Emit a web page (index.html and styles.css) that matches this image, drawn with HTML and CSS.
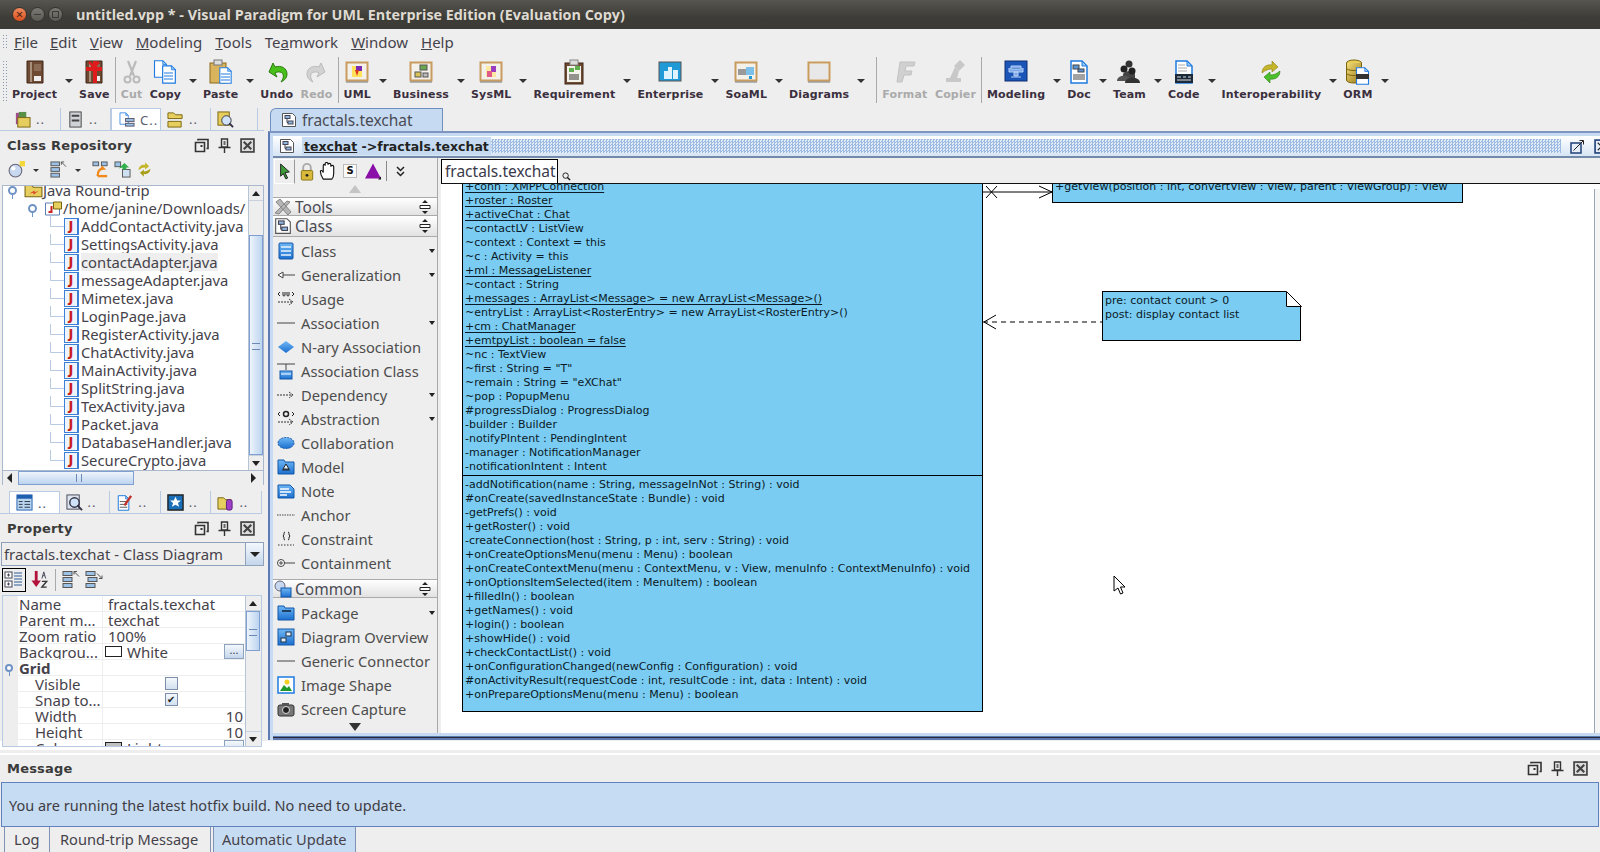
FILE: index.html
```html
<!DOCTYPE html>
<html lang="en">
<head>
<meta charset="utf-8">
<title>untitled.vpp * - Visual Paradigm for UML Enterprise Edition (Evaluation Copy)</title>
<link rel="stylesheet" href="styles.css">
</head>
<body>
<svg class="defs" width="0" height="0" aria-hidden="true">
  <defs>
    <linearGradient id="gb" x1="0" y1="0" x2="0" y2="1"><stop offset="0" stop-color="#6fb8f5"/><stop offset="1" stop-color="#1c6fd0"/></linearGradient>
    <linearGradient id="gold" x1="0" y1="0" x2="1" y2="1"><stop offset="0" stop-color="#f3dc7a"/><stop offset="1" stop-color="#9a7a17"/></linearGradient>
    <symbol id="restore" viewBox="0 0 15 15"><path d="M1.5 4.5h9v9h-9z M4 2.5V1.500h10v9h-1.500" fill="none" stroke="#333" stroke-width="1.600"/><rect x="6.500" y="7" width="2" height="2" fill="#333"/></symbol>
    <symbol id="pin" viewBox="0 0 13 15"><path d="M3.500 1h6v8h-6z M0.500 9.500h12 M6.500 10v5" fill="none" stroke="#333" stroke-width="1.400"/><rect x="5.500" y="3" width="2" height="4" fill="#666"/></symbol>
    <symbol id="close" viewBox="0 0 14 14"><rect x="1" y="1" width="12" height="12" fill="#ddd" stroke="#444" stroke-width="1.600"/><path d="M3.500 3.500l7 7M10.500 3.500l-7 7" stroke="#444" stroke-width="2"/></symbol>
    <symbol id="book" viewBox="0 0 26 26"><path d="M5 2h16v22H5z" fill="#6f4a32" stroke="#3e2616"/><path d="M9 3v20" stroke="#a8907c" stroke-width="2"/><rect x="12" y="17" width="7" height="5" fill="#eee"/><rect x="12" y="5" width="7" height="7" fill="#8a6c56"/></symbol>
    <symbol id="framed" viewBox="0 0 26 26"><rect x="2.500" y="3.500" width="21" height="18" fill="#f4f1ea" stroke="#c89b5e" stroke-width="2"/><path d="M2 23h22" stroke="#777"/></symbol>
    <symbol id="doc" viewBox="0 0 20 24"><path d="M2 1h11l5 5v17H2z" fill="#fff" stroke="#1f7be0" stroke-width="1.500"/><path d="M13 1v5h5z" fill="#9ac8f5" stroke="#1f7be0"/></symbol>
    <symbol id="diagramdoc" viewBox="0 0 16 16"><path d="M1.500 1.500h10l3 3v10h-13z" fill="#fff" stroke="#555"/><rect x="4" y="3.500" width="5" height="3" fill="#8fb6de" stroke="#445"/><rect x="7" y="9" width="5" height="3" fill="#8fb6de" stroke="#445"/><path d="M6 6.500v4h1" fill="none" stroke="#445"/></symbol>
    <symbol id="updown" viewBox="0 0 12 14"><path d="M6 0l3 3H3zM6 14l-3-3h6z" fill="#222"/><path d="M1 5.500h10v3H1z" fill="#fff" stroke="#222"/></symbol>
  </defs>
</svg>

<div class="app">
  <header class="titlebar">
    <span class="wbtn wclose">×</span>
    <span class="wbtn wmin"></span>
    <span class="wbtn wmax"></span>
    <span class="wtitle">untitled.vpp * - Visual Paradigm for UML Enterprise Edition (Evaluation Copy)</span>
  </header>

  <nav class="menubar">
    <i class="grip"></i>
    <span class="mi"><u>F</u>ile</span><span class="mi"><u>E</u>dit</span><span class="mi"><u>V</u>iew</span><span class="mi"><u>M</u>odeling</span><span class="mi"><u>T</u>ools</span><span class="mi">Te<u>a</u>mwork</span><span class="mi"><u>W</u>indow</span><span class="mi"><u>H</u>elp</span>
  </nav>

  <div class="toolbar">
    <i class="grip tall"></i>
    <div class="tool"><svg class="ti"><use href="#book"/></svg><span>Project</span></div><b class="arr"></b>
    <div class="tool"><svg class="ti" viewBox="0 0 26 26"><use href="#book" width="26" height="26"/><path d="M12 2h4v22h-4z" fill="#e01b1b"/><path d="M5 8h16v4H5z" fill="#e01b1b"/><path d="M8 3l5 5 5-5" fill="none" stroke="#e01b1b" stroke-width="2.500"/></svg><span>Save</span></div>
    <i class="sep"></i>
    <div class="tool off"><svg class="ti" viewBox="0 0 26 26"><path d="M9 2l6 15M17 2l-6 15" stroke="#bbb" stroke-width="2.200" fill="none"/><circle cx="8.500" cy="20.500" r="3" fill="none" stroke="#bbb" stroke-width="2"/><circle cx="17.500" cy="20.500" r="3" fill="none" stroke="#bbb" stroke-width="2"/></svg><span>Cut</span></div>
    <div class="tool gapl"><svg class="ti" viewBox="0 0 26 26"><use href="#doc" x="1" y="1" width="15" height="18"/><use href="#doc" x="9" y="6" width="16" height="19"/><path d="M12 14h9M12 17h9M12 20h9" stroke="#1f7be0"/></svg><span>Copy</span></div><b class="arr"></b>
    <div class="tool"><svg class="ti" viewBox="0 0 26 26"><rect x="2" y="4" width="16" height="20" fill="#d9b45c" stroke="#8a6a1c"/><rect x="6" y="1" width="8" height="5" fill="#ddd" stroke="#777"/><use href="#doc" x="10" y="8" width="15" height="17"/><path d="M13 15h9M13 18h9M13 21h9" stroke="#1f7be0"/></svg><span>Paste</span></div><b class="arr"></b>
    <div class="tool"><svg class="ti" viewBox="0 0 26 26"><path d="M5 13l4-9 2 4c6-2 12 1 12 7 0 5-4 7-6 8 2-3 3-5 2-8-1-2-5-3-8-1l2 4z" fill="#48c01a" stroke="#2c7a10"/></svg><span>Undo</span></div>
    <div class="tool off gapl"><svg class="ti" viewBox="0 0 26 26"><path d="M21 13l-4-9-2 4C9 6 3 9 3 15c0 5 4 7 6 8-2-3-3-5-2-8 1-2 5-3 8-1l-2 4z" fill="#d2d2d2" stroke="#bbb"/></svg><span>Redo</span></div>
    <i class="sep"></i>
    <div class="tool"><svg class="ti" viewBox="0 0 26 26"><use href="#framed" width="26" height="26"/><path d="M8 7h10v11H8z" fill="#ffe25a"/><path d="M12 7h6v5h-6z" fill="#7a2bb0"/><path d="M11 11h4l-2 6z" fill="#d32"/></svg><span>UML</span></div><b class="arr"></b>
    <div class="tool"><svg class="ti" viewBox="0 0 26 26"><use href="#framed" width="26" height="26"/><rect x="12" y="6" width="7" height="5" fill="#6aa84f" stroke="#555"/><rect x="7" y="13" width="6" height="5" fill="#d8c25a" stroke="#555"/><rect x="15" y="14" width="5" height="4" fill="#bbb" stroke="#555"/></svg><span>Business</span></div><b class="arr"></b>
    <div class="tool"><svg class="ti" viewBox="0 0 26 26"><use href="#framed" width="26" height="26"/><path d="M8 7h10v11H8z" fill="#ffe9a0"/><path d="M13 7h5v6h-5z" fill="#9a3bc0"/><path d="M9 12h5v6H9z" fill="#e05a8a"/></svg><span>SysML</span></div><b class="arr"></b>
    <div class="tool"><svg class="ti" viewBox="0 0 26 26"><rect x="4" y="4" width="18" height="21" fill="#6f4a32" stroke="#3e2616"/><rect x="6" y="7" width="14" height="16" fill="#f2f2ea"/><rect x="9" y="1" width="8" height="5" fill="#ddd" stroke="#888"/><rect x="8" y="9" width="5" height="4" fill="#5fae4f"/><rect x="14" y="7" width="5" height="4" fill="#5fae4f"/><path d="M8 16h10M8 18h10M8 20h10" stroke="#333"/></svg><span>Requirement</span></div><b class="arr"></b>
    <div class="tool"><svg class="ti" viewBox="0 0 26 26"><rect x="2" y="3" width="22" height="19" fill="#1f9ad6" stroke="#555"/><path d="M7 20v-8h4v-4h4v12zM16 20v-9h5v9z" fill="#dff3ff"/></svg><span>Enterprise</span></div><b class="arr"></b>
    <div class="tool"><svg class="ti" viewBox="0 0 26 26"><use href="#framed" width="26" height="26"/><rect x="5" y="10" width="8" height="6" fill="#999"/><rect x="13" y="8" width="8" height="8" fill="#7cc0ea"/><rect x="16" y="17" width="3" height="3" fill="#1f9ad6"/></svg><span>SoaML</span></div><b class="arr"></b>
    <div class="tool"><svg class="ti" viewBox="0 0 26 26"><use href="#framed" width="26" height="26"/><rect x="4" y="5" width="18" height="15" fill="#e8e8e8"/></svg><span>Diagrams</span></div><b class="arr"></b>
    <i class="sep"></i>
    <div class="tool off"><svg class="ti" viewBox="0 0 26 26"><path d="M8 3h15l-1 4H14l-1 5h7l-1 4h-7l-2 7H5z" fill="#d0d0d0" stroke="#c2c2c2"/></svg><span>Format</span></div>
    <div class="tool off gapl"><svg class="ti" viewBox="0 0 26 26"><path d="M18 1l5 5-6 6-5-5z" fill="#c8c8c8"/><path d="M13 8l4 4-2 7H8z" fill="#c8c8c8"/><rect x="4" y="19" width="15" height="4" fill="#c8c8c8"/></svg><span>Copier</span></div>
    <i class="sep"></i>
    <div class="tool"><svg class="ti" viewBox="0 0 26 26"><rect x="2" y="2" width="22" height="20" fill="#1c55b8" stroke="#0d2f6e"/><path d="M8 7h10v3H8zM11 13h4v4h-4zM6 9v4h14V9M8 18h10" fill="#7da8e8" stroke="#b7d0f5"/></svg><span>Modeling</span></div><b class="arr"></b>
    <div class="tool"><svg class="ti" viewBox="0 0 26 26"><use href="#doc" x="3" y="1" width="20" height="24"/><rect x="7" y="6" width="6" height="4" fill="#5c95d6" stroke="#444"/><rect x="12" y="10" width="6" height="3" fill="#5c95d6" stroke="#444"/><path d="M7 16h12M7 18h12M7 20h12" stroke="#444"/></svg><span>Doc</span></div><b class="arr"></b>
    <div class="tool"><svg class="ti" viewBox="0 0 26 26"><circle cx="13" cy="5" r="3.500" fill="#333"/><path d="M7 16c0-5 12-5 12 0v4H7z" fill="#444"/><circle cx="8" cy="10" r="3.500" fill="#222"/><path d="M1 22c0-7 14-7 14 0z" fill="#555"/><circle cx="16" cy="12" r="3.500" fill="#222"/><path d="M9 24c0-7 15-7 15 0z" fill="#333"/></svg><span>Team</span></div><b class="arr"></b>
    <div class="tool"><svg class="ti" viewBox="0 0 26 26"><use href="#doc" x="3" y="1" width="20" height="24"/><path d="M7 6h7M7 9h9M7 12h9" stroke="#aaa"/><rect x="4" y="15" width="18" height="9" fill="#1b2a3a"/><path d="M6 18h4M12 18h3M17 18h3M6 21h14" stroke="#ddd"/></svg><span>Code</span></div><b class="arr"></b>
    <div class="tool"><svg class="ti" viewBox="0 0 26 26"><path d="M4 14c0-6 5-9 10-8V2l6 6-6 5v-3c-4 0-6 1-10 4z" fill="#c5b52a" stroke="#8a7d12" stroke-width=".6"/><path d="M22 12c0 6-5 9-10 8v4l-6-6 6-5v3c4 0 6-1 10-4z" fill="#4cc02a" stroke="#2c7a10" stroke-width=".6"/></svg><span>Interoperability</span></div><b class="arr"></b>
    <div class="tool"><svg class="ti" viewBox="0 0 26 26"><ellipse cx="9" cy="4" rx="7.500" ry="3" fill="#e7cf58" stroke="#7a6410"/><path d="M1.500 4v17c0 4 15 4 15 0V4" fill="url(#gold)" stroke="#7a6410"/><path d="M2 10c3 2 11 2 14 0M2 15c3 2 11 2 14 0" stroke="#7a6410" fill="none"/><use href="#doc" x="10" y="8" width="15" height="18"/><rect x="11" y="15" width="13" height="5" fill="#333"/></svg><span>ORM</span></div><b class="arr"></b>
  </div>

  <div class="workspace">
    <aside class="left">
      <div class="docktabs one">
        <span class="dtab"><svg class="dti" viewBox="0 0 18 18"><rect x="2" y="2" width="8" height="12" fill="#a04b8a"/><rect x="5" y="1" width="8" height="12" fill="#5a8f4a"/><rect x="4" y="7" width="13" height="10" fill="#e5cd5e" stroke="#7a6410"/></svg><em>..</em></span>
        <span class="dtab"><svg class="dti" viewBox="0 0 18 18"><rect x="3" y="1" width="12" height="16" fill="#cfd2d6" stroke="#444"/><path d="M5 5h8M5 10h8" stroke="#444" stroke-width="2"/></svg><em>..</em></span>
        <span class="dtab"><svg class="dti" viewBox="0 0 18 18"><use href="#doc" x="1" y="1" width="11" height="14"/><rect x="8" y="8" width="9" height="3" fill="#9cc1e6" stroke="#556"/><rect x="8" y="13" width="9" height="3" fill="#9cc1e6" stroke="#556"/></svg><em>C..</em></span>
        <span class="dtab"><svg class="dti" viewBox="0 0 18 18"><path d="M1 2h6l2 2h7v4H1z" fill="#e6cf5e" stroke="#7a6410"/><path d="M1 11h14v6H1z" fill="#e6cf5e" stroke="#7a6410"/></svg><em>..</em></span>
        <span class="dtab"><svg class="dti" viewBox="0 0 18 18"><rect x="1" y="1" width="12" height="14" fill="#e5cd5e" stroke="#7a6410"/><circle cx="10" cy="10" r="5" fill="#cfe2f7" stroke="#334"/><path d="M13 13l4 4" stroke="#334" stroke-width="2"/></svg></span>
      </div>

      <div class="phead rep"><span>Class Repository</span><div class="pbtns"><svg><use href="#restore"/></svg><svg><use href="#pin"/></svg><svg><use href="#close"/></svg></div></div>

      <div class="reptools">
        <svg class="rt" viewBox="0 0 16 16"><circle cx="7" cy="9" r="6" fill="#c7d8f0" stroke="#667"/><circle cx="5" cy="7" r="2" fill="#fff"/><rect x="11" y="0" width="5" height="5" fill="#f4d83a"/></svg><b class="arr small"></b>
        <svg class="rt" viewBox="0 0 18 18"><rect x="1" y="1" width="9" height="4" fill="#9cc1e6" stroke="#555"/><rect x="1" y="7" width="9" height="4" fill="#9cc1e6" stroke="#555"/><rect x="1" y="13" width="9" height="4" fill="#9cc1e6" stroke="#555"/><path d="M12 1l5 5M12 1h3M12 1v3" stroke="#555" fill="none"/></svg><b class="arr small"></b>
        <svg class="rt" viewBox="0 0 18 18"><rect x="1" y="1" width="6" height="4" fill="#9cc1e6" stroke="#555"/><rect x="10" y="1" width="6" height="4" fill="#9cc1e6" stroke="#555"/><path d="M6 16c0-6 2-8 6-8l-2-2" stroke="#f08a1c" stroke-width="2.500" fill="none"/><path d="M6 16h10" stroke="#f08a1c" stroke-width="2.500"/></svg>
        <svg class="rt" viewBox="0 0 18 18"><rect x="1" y="1" width="6" height="5" fill="#9cc1e6" stroke="#555"/><rect x="9" y="9" width="8" height="8" fill="#cfe0f2" stroke="#555"/><path d="M5 8l6-6 5 5-3 0 0 2h-4l0-2z" fill="#2fb04a"/></svg>
        <svg class="rt" viewBox="0 0 26 26"><path d="M4 14c0-6 5-9 10-8V2l6 6-6 5v-3c-4 0-6 1-10 4z" fill="#c5b52a"/><path d="M22 12c0 6-5 9-10 8v4l-6-6 6-5v3c4 0 6-1 10-4z" fill="#a8a018"/></svg>
      </div>

      <div class="treebox">
        <div class="treeinner">
          <div class="tree">
            <div class="row r0"><i class="knob"></i><svg class="folder" viewBox="0 0 18 14"><path d="M1 2h6l2 2h8v9H1z" fill="#e6cf5e" stroke="#7a6410"/><path d="M5 10l5-3v2l4-2-5 4v-2z" fill="#d32"/></svg><span>Java Round-trip</span></div>
            <div class="row r1"><i class="knob"></i><svg class="folder" viewBox="0 0 18 16"><path d="M1 3h14v12H1z" fill="#fff" stroke="#5c7fb5"/><path d="M9 2h8v7H9z" fill="#e6cf5e" stroke="#7a6410"/><path d="M7 6v6H4" stroke="#c22" stroke-width="2" fill="none"/></svg><span>/home/janine/Downloads/</span></div>
            <div class="row r2"><i class="j">J</i><span>AddContactActivity.java</span></div>
            <div class="row r2"><i class="j">J</i><span>SettingsActivity.java</span></div>
            <div class="row r2"><i class="j">J</i><span class="hl">contactAdapter.java</span></div>
            <div class="row r2"><i class="j">J</i><span>messageAdapter.java</span></div>
            <div class="row r2"><i class="j">J</i><span>Mimetex.java</span></div>
            <div class="row r2"><i class="j">J</i><span>LoginPage.java</span></div>
            <div class="row r2"><i class="j">J</i><span>RegisterActivity.java</span></div>
            <div class="row r2"><i class="j">J</i><span>ChatActivity.java</span></div>
            <div class="row r2"><i class="j">J</i><span>MainActivity.java</span></div>
            <div class="row r2"><i class="j">J</i><span>SplitString.java</span></div>
            <div class="row r2"><i class="j">J</i><span>TexActivity.java</span></div>
            <div class="row r2"><i class="j">J</i><span>Packet.java</span></div>
            <div class="row r2"><i class="j">J</i><span>DatabaseHandler.java</span></div>
            <div class="row r2"><i class="j">J</i><span>SecureCrypto.java</span></div>
          </div>
          <div class="vbar tall"><b class="vbtn up"></b><i class="vthumb treethumb"></i><b class="vbtn down"></b></div>
        </div>
        <div class="hbar"><b class="hbtn lf"></b><i class="hthumb"></i><i class="hfill"></i><b class="hbtn rt2"></b></div>
      </div>

      <div class="docktabs two">
        <span class="dtab on"><svg class="dti" viewBox="0 0 18 18"><rect x="1" y="1" width="16" height="16" fill="#bcd6f0" stroke="#1f5fb0"/><rect x="1" y="1" width="16" height="4" fill="#1f5fb0"/><path d="M3 8h4M9 8h6M3 11h4M9 11h6M3 14h4M9 14h6" stroke="#234"/></svg><em>..</em></span>
        <span class="dtab"><svg class="dti" viewBox="0 0 18 18"><rect x="1" y="1" width="13" height="15" fill="#dde6f0" stroke="#445"/><circle cx="9" cy="9" r="5" fill="#cfe2f7" stroke="#334" stroke-width="1.500"/><path d="M12 12l5 5" stroke="#334" stroke-width="2"/></svg><em>..</em></span>
        <span class="dtab"><svg class="dti" viewBox="0 0 18 18"><use href="#doc" x="1" y="1" width="14" height="17"/><path d="M4 8h8M4 11h8M4 14h8" stroke="#555"/><path d="M9 12l7-10" stroke="#c2302a" stroke-width="2.500"/></svg><em>..</em></span>
        <span class="dtab"><svg class="dti" viewBox="0 0 18 18"><rect x="1" y="1" width="16" height="16" fill="#1b6fb8" stroke="#222" stroke-width="1.500"/><path d="M9 3l1.800 4h4l-3.200 2.600 1.200 4L9 11.400 5.200 13.600l1.200-4L3.200 7h4z" fill="#fff"/></svg><em>..</em></span>
        <span class="dtab"><svg class="dti" viewBox="0 0 18 18"><path d="M1 4h6l2 2h6v10H1z" fill="#e6cf5e" stroke="#7a6410"/><rect x="10" y="6" width="6" height="11" rx="2" fill="#a040c8" stroke="#5a1c80"/></svg><em>..</em></span>
      </div>

      <div class="phead prop"><span>Property</span><div class="pbtns"><svg><use href="#restore"/></svg><svg><use href="#pin"/></svg><svg><use href="#close"/></svg></div></div>

      <div class="combo"><span>fractals.texchat - Class Diagram</span><b class="cbtn"></b></div>

      <div class="ptools">
        <span class="ptsel"><svg viewBox="0 0 20 20"><rect x="1" y="2" width="7" height="6" fill="#fff" stroke="#445"/><rect x="1" y="11" width="7" height="6" fill="#fff" stroke="#445"/><path d="M10 3h8M10 6h8M10 9h8M10 12h8M10 15h8" stroke="#6d8db5" stroke-width="1.500"/><path d="M3 5h3M4.500 3.500v3M3 14h3M4.500 12.500v3" stroke="#445"/></svg></span>
        <svg class="pt" viewBox="0 0 18 20"><path d="M5 1v12" stroke="#b3123c" stroke-width="3"/><path d="M0 11h10l-5 7z" fill="#b3123c"/><path d="M11 9l2-7 2 7M12 6h2" stroke="#445" fill="none"/><path d="M11 12h5l-5 6h5" stroke="#333" fill="none" stroke-width="1.500"/></svg>
        <i class="ptsep"></i>
        <svg class="pt" viewBox="0 0 18 18"><rect x="1" y="1" width="9" height="4" fill="#9cc1e6" stroke="#555"/><rect x="1" y="7" width="9" height="4" fill="#9cc1e6" stroke="#555"/><rect x="1" y="13" width="9" height="4" fill="#9cc1e6" stroke="#555"/><path d="M12 1l5 5M12 1h3M12 1v3" stroke="#555" fill="none"/></svg>
        <svg class="pt" viewBox="0 0 18 18"><rect x="1" y="1" width="9" height="4" fill="#9cc1e6" stroke="#555"/><rect x="3" y="7" width="9" height="4" fill="#9cc1e6" stroke="#555"/><rect x="1" y="13" width="9" height="4" fill="#9cc1e6" stroke="#555"/><path d="M12 3l5 5M17 8h-3M17 8V5" stroke="#555" fill="none"/></svg>
      </div>

      <div class="ptable">
        <div class="pgrid">
          <div class="pr"><span class="pn">Name</span><span class="pv">fractals.texchat</span></div>
          <div class="pr"><span class="pn">Parent m...</span><span class="pv">texchat</span></div>
          <div class="pr"><span class="pn">Zoom ratio</span><span class="pv">100%</span></div>
          <div class="pr"><span class="pn">Backgrou...</span><span class="pv"><i class="swatch"></i>White<b class="more">...</b></span></div>
          <div class="pr"><span class="pn grid"><i class="knob small"></i>Grid</span><span class="pv"></span></div>
          <div class="pr"><span class="pn ind">Visible</span><span class="pv ctr"><i class="chk"></i></span></div>
          <div class="pr"><span class="pn ind">Snap to...</span><span class="pv ctr"><i class="chk">✔</i></span></div>
          <div class="pr"><span class="pn ind">Width</span><span class="pv num">10</span></div>
          <div class="pr"><span class="pn ind">Height</span><span class="pv num">10</span></div>
          <div class="pr"><span class="pn ind">Color</span><span class="pv"><i class="swatch gray"></i>Light gray<b class="more">...</b></span></div>
        </div>
        <div class="vbar"><b class="vbtn up"></b><i class="vthumb propthumb"></i><b class="vbtn down"></b></div>
      </div>
    </aside>

    <main class="editor">
      <div class="edtabs">
        <span class="edtab"><svg><use href="#diagramdoc"/></svg>fractals.texchat</span>
      </div>
      <div class="frame">
        <div class="ftitle">
          <svg class="fdoc"><use href="#diagramdoc"/></svg>
          <span class="fname"><u>texchat</u> -&gt;fractals.texchat</span>
          <i class="dots"></i>
          <svg class="fbtn" viewBox="0 0 15 15"><rect x="1" y="4" width="10" height="10" fill="#e6eef8" stroke="#2c4a80" stroke-width="1.600"/><path d="M3.500 11.500L13 2M9.500 1.500h4v4" fill="none" stroke="#222"/></svg>
          <svg class="fbtn cut" viewBox="0 0 14 14"><rect x="1" y="1" width="12" height="12" fill="#e6eef8" stroke="#2c4a80" stroke-width="1.600"/><path d="M3.500 3.500l7 7M10.500 3.500l-7 7" stroke="#222"/></svg>
        </div>
        <div class="fview">
          <section class="palette">
            <div class="paltools">
              <span class="palsel"><svg viewBox="0 0 16 20"><path d="M3 2l10 9-5 1 3 6-2 1-3-6-3 3z" fill="#3f9a3a" stroke="#111"/></svg></span>
              <svg class="pal18 lock" viewBox="0 0 18 20"><path d="M5 9V6a4 4 0 018 0v3" fill="none" stroke="#aaa" stroke-width="2"/><rect x="3" y="9" width="12" height="10" rx="1" fill="#d8b93c" stroke="#8a7316"/><circle cx="9" cy="14" r="1.500" fill="#222"/></svg>
              <svg class="pal18" viewBox="0 0 18 20"><path d="M4 18c-2-3-3-6-3-8s2-1 3 1V4c0-2 2-2 2 0V2c0-2 3-2 3 0v1c0-2 3-2 3 0v2c0-2 3-2 3 0v7c0 3-1 5-2 6z" fill="#fff" stroke="#111" stroke-width="1.200"/></svg>
              <span class="sbtn">S</span>
              <svg class="pal18 tri" viewBox="0 0 18 18"><path d="M9 1l8 15H1z" fill="#8a0fa8"/><path d="M14 17l3-3v3z" fill="#111"/></svg>
              <i class="palsep"></i>
              <svg class="chev" viewBox="0 0 9 11"><path d="M1 1l3.500 3.500L8 1M1 6l3.500 3.500L8 6" fill="none" stroke="#222" stroke-width="1.500"/></svg>
            </div>
            <div class="palup"></div>
            <div class="palhead tools"><svg viewBox="0 0 18 18" class="phi"><path d="M2 4l4-3 11 13-3 3zM1 15L13 3l3 1-11 12z" fill="#b5b5b5" stroke="#888"/></svg><span>Tools</span><svg class="ud"><use href="#updown"/></svg></div>
            <div class="palhead cls"><svg class="phi"><use href="#diagramdoc"/></svg><span>Class</span><svg class="ud"><use href="#updown"/></svg></div>
            <div class="palitems">
              <div class="pi more1"><svg viewBox="0 0 18 18"><rect x="2" y="1" width="14" height="16" rx="1" fill="url(#gb)" stroke="#1357a8"/><path d="M4 5h10M4 9h10M4 13h10" stroke="#e8f3ff" stroke-width="1.500"/></svg><span>Class</span></div>
              <div class="pi more1"><svg viewBox="0 0 18 18"><path d="M6 9h12" stroke="#444"/><path d="M1 9l5-3v6z" fill="#fff" stroke="#444"/></svg><span>Generalization</span></div>
              <div class="pi"><svg viewBox="0 0 18 18"><path d="M1 12h15M12 9l4 3-4 3" fill="none" stroke="#333" stroke-dasharray="2 1"/><path d="M6 2v3a1 1 0 002 0V2M10 2v3a1 1 0 002 0V2M3 2L1 4l2 2M15 2l2 2-2 2" fill="none" stroke="#222"/></svg><span>Usage</span></div>
              <div class="pi more1"><svg viewBox="0 0 18 18"><path d="M0 9h18" stroke="#444"/></svg><span>Association</span></div>
              <div class="pi"><svg viewBox="0 0 18 18"><path d="M9 3l8 6-8 6-8-6z" fill="url(#gb)"/></svg><span>N-ary Association</span></div>
              <div class="pi"><svg viewBox="0 0 18 18"><path d="M0 2h18M9 2v6" stroke="#444"/><rect x="3" y="9" width="12" height="8" fill="url(#gb)" stroke="#1357a8"/><path d="M4 12h10" stroke="#fff"/></svg><span>Association Class</span></div>
              <div class="pi more1"><svg viewBox="0 0 18 18"><path d="M0 9h16M12 6l4 3-4 3" fill="none" stroke="#333" stroke-dasharray="2 1"/></svg><span>Dependency</span></div>
              <div class="pi more1"><svg viewBox="0 0 18 18"><path d="M1 12h15M12 9l4 3-4 3" fill="none" stroke="#333" stroke-dasharray="2 1"/><path d="M3 2L1 4l2 2M15 2l2 2-2 2" fill="none" stroke="#222"/><circle cx="9" cy="4" r="2.500" fill="none" stroke="#222" stroke-width="1.500"/></svg><span>Abstraction</span></div>
              <div class="pi"><svg viewBox="0 0 18 18"><ellipse cx="9" cy="9" rx="8" ry="5.500" fill="url(#gb)" stroke="#1357a8" stroke-dasharray="2 1"/></svg><span>Collaboration</span></div>
              <div class="pi"><svg viewBox="0 0 18 18"><path d="M1 4V2h6l1 2h9v12H1z" fill="url(#gb)" stroke="#1357a8"/><path d="M9 6l3 5H6zM5 12h8" fill="#e8f3ff" stroke="#222"/></svg><span>Model</span></div>
              <div class="pi"><svg viewBox="0 0 18 18"><path d="M1 3h12l4 4v9H1z" fill="url(#gb)" stroke="#1357a8"/><path d="M3 7h9M3 10h11M3 13h7" stroke="#fff" stroke-width="1.300"/></svg><span>Note</span></div>
              <div class="pi"><svg viewBox="0 0 18 18"><path d="M0 9h18" stroke="#444" stroke-dasharray="1.500 1"/></svg><span>Anchor</span></div>
              <div class="pi"><svg viewBox="0 0 18 18"><path d="M1 15h16" stroke="#333" stroke-dasharray="1.500 1.500"/><path d="M8 2c-2 0 0 3-2 4 2 1 0 4 2 4M11 2c2 0 0 3 2 4-2 1 0 4-2 4" fill="none" stroke="#222"/></svg><span>Constraint</span></div>
              <div class="pi"><svg viewBox="0 0 18 18"><circle cx="4" cy="9" r="3.500" fill="#fff" stroke="#444"/><path d="M2 9h4M4 7v4M7 9h11" stroke="#444"/></svg><span>Containment</span></div>
            </div>
            <div class="palhead common"><svg viewBox="0 0 18 18" class="phi"><circle cx="6" cy="6" r="5" fill="#c7d8f0" stroke="#667"/><rect x="7" y="8" width="10" height="9" fill="url(#gb)" stroke="#1357a8"/></svg><span>Common</span><svg class="ud"><use href="#updown"/></svg></div>
            <div class="palitems low">
              <div class="pi more1"><svg viewBox="0 0 18 18"><path d="M1 4V2h6l1 2h9v12H1z" fill="url(#gb)" stroke="#1357a8"/><path d="M5 7h9" stroke="#123" stroke-width="1.500"/></svg><span>Package</span></div>
              <div class="pi"><svg viewBox="0 0 18 18"><rect x="1" y="1" width="16" height="16" fill="url(#gb)" stroke="#1357a8"/><rect x="9" y="4" width="5" height="4" fill="#dfeeff" stroke="#234"/><rect x="4" y="10" width="5" height="4" fill="#dfeeff" stroke="#234"/></svg><span>Diagram Overview</span></div>
              <div class="pi"><svg viewBox="0 0 18 18"><path d="M0 9h18" stroke="#444"/></svg><span>Generic Connector</span></div>
              <div class="pi"><svg viewBox="0 0 18 18"><rect x="1" y="1" width="16" height="16" fill="#fff" stroke="#1f7be0" stroke-width="1.500"/><path d="M3 15l4-6 3 3 2-2 3 5z" fill="#1f9a2a"/><circle cx="10" cy="6" r="2.500" fill="#f4d021"/></svg><span>Image Shape</span></div>
              <div class="pi"><svg viewBox="0 0 18 18"><rect x="1" y="5" width="16" height="11" rx="2" fill="#777" stroke="#333"/><rect x="5" y="3" width="7" height="3" fill="#555"/><circle cx="9" cy="10" r="3.500" fill="#222" stroke="#ddd"/></svg><span>Screen Capture</span></div>
            </div>
            <div class="paldown"></div>
          </section>
          <section class="pane">
            <div class="dtabstrip">
              <span class="dtabname">fractals.texchat</span>
              <svg class="zoomglass" viewBox="0 0 10 10"><circle cx="4" cy="4" r="3" fill="none" stroke="#111"/><path d="M6 6l3 3" stroke="#111" stroke-width="1.500"/></svg>
            </div>
            <div class="canvas">
              <div class="node uml">
                <div class="attrs">
                  <div class="st">+conn : XMPPConnection</div>
                  <div class="st">+roster : Roster</div>
                  <div class="st">+activeChat : Chat</div>
                  <div>~contactLV : ListView</div>
                  <div>~context : Context = this</div>
                  <div>~c : Activity = this</div>
                  <div class="st">+ml : MessageListener</div>
                  <div>~contact : String</div>
                  <div class="st">+messages : ArrayList&lt;Message&gt; = new ArrayList&lt;Message&gt;()</div>
                  <div>~entryList : ArrayList&lt;RosterEntry&gt; = new ArrayList&lt;RosterEntry&gt;()</div>
                  <div class="st">+cm : ChatManager</div>
                  <div class="st">+emtpyList : boolean = false</div>
                  <div>~nc : TextView</div>
                  <div>~first : String = "T"</div>
                  <div>~remain : String = "eXChat"</div>
                  <div>~pop : PopupMenu</div>
                  <div>#progressDialog : ProgressDialog</div>
                  <div>-builder : Builder</div>
                  <div>-notifyPIntent : PendingIntent</div>
                  <div>-manager : NotificationManager</div>
                  <div>-notificationIntent : Intent</div>
                </div>
                <div class="methods">
                  <div>-addNotification(name : String, messageInNot : String) : void</div>
                  <div>#onCreate(savedInstanceState : Bundle) : void</div>
                  <div>-getPrefs() : void</div>
                  <div>+getRoster() : void</div>
                  <div>-createConnection(host : String, p : int, serv : String) : void</div>
                  <div>+onCreateOptionsMenu(menu : Menu) : boolean</div>
                  <div>+onCreateContextMenu(menu : ContextMenu, v : View, menuInfo : ContextMenuInfo) : void</div>
                  <div>+onOptionsItemSelected(item : MenuItem) : boolean</div>
                  <div>+filledIn() : boolean</div>
                  <div>+getNames() : void</div>
                  <div>+login() : boolean</div>
                  <div>+showHide() : void</div>
                  <div>+checkContactList() : void</div>
                  <div>+onConfigurationChanged(newConfig : Configuration) : void</div>
                  <div>#onActivityResult(requestCode : int, resultCode : int, data : Intent) : void</div>
                  <div>+onPrepareOptionsMenu(menu : Menu) : boolean</div>
                </div>
              </div>
              <div class="node adapter"><div>+getView(position : int, convertView : View, parent : ViewGroup) : View</div></div>
              <div class="node note"><div>pre: contact count &gt; 0</div><div>post: display contact list</div></div>
              <svg class="wires" width="1154" height="400">
                <path d="M542 8h70" stroke="#000" fill="none"/>
                <path d="M545 2l11 12M556 2l-11 12M598 2l13 6-13 6" stroke="#000" fill="none"/>
                <path d="M542 138h119" stroke="#000" stroke-dasharray="5 4" fill="none"/>
                <path d="M555 131l-12 7 12 7" stroke="#000" fill="none"/>
                <rect x="845" y="107" width="16" height="16" fill="#fff"/>
                <path d="M845.500 107.500v15h15l-15-15" fill="none" stroke="#000"/>
              </svg>
              <svg class="pointer" viewBox="0 0 12 20"><path d="M1 1v15l4-3 2.500 6 2.500-1-2.500-6h4.500z" fill="#fff" stroke="#000"/></svg>
              <i class="edgebar"></i>
            </div>
          </section>
        </div>
        <i class="ffoot"></i>
      </div>
    </main>
  </div>

  <footer class="message">
    <div class="phead msg"><span>Message</span><div class="pbtns"><svg><use href="#restore"/></svg><svg><use href="#pin"/></svg><svg><use href="#close"/></svg></div></div>
    <div class="msgbox">You are running the latest hotfix build. No need to update.</div>
    <div class="msgtabs"><span class="mt log">Log</span><span class="mt rtm">Round-trip Message</span><span class="mt on">Automatic Update</span></div>
  </footer>
</div>
</body>
</html>
```

FILE: styles.css
```css
* { box-sizing: border-box; }
html, body { margin: 0; padding: 0; }
body { width: 1600px; height: 852px; overflow: hidden; background: #eee; font-family: "Noto Sans", sans-serif; color: #45424a; }
.defs { position: absolute; }
i, em, b { font-style: normal; font-weight: normal; display: block; }
svg { display: block; flex: none; }
.app { display: flex; flex-direction: column; width: 1600px; height: 852px; overflow: hidden; }

.titlebar { flex: none; height: 29px; display: flex; align-items: center; padding-left: 12px; background: linear-gradient(#57554f, #3d3c37 60%, #3c3b37); }
.wbtn { width: 15px; height: 15px; border-radius: 50%; margin-right: 3px; background: linear-gradient(#7b7972, #5b5a54); border: 1px solid #33322e; color: #4a2313; font-size: 13px; line-height: 12px; text-align: center; position: relative; }
.wclose { background: linear-gradient(#f08a5d, #d9501e); }
.wmin::after { content: ""; position: absolute; left: 3px; right: 3px; top: 6px; height: 1px; background: #3a3a36; }
.wmax::after { content: ""; position: absolute; left: 3px; right: 3px; top: 3px; bottom: 3px; border: 1px solid #3a3a36; }
.wtitle { margin-left: 10px; color: #dfdbd2; font: bold 14.350px "Open Sans", sans-serif; }

.grip { width: 6px; background: radial-gradient(#8a9ab0 0.8px, transparent 1px) 0 0 / 3px 3px; }
.menubar { flex: none; height: 25px; display: flex; align-items: center; padding-left: 2px; background: #eee; font-size: 15px; }
.menubar .grip { height: 16px; margin-right: 6px; }
.mi { margin-right: 13px; }
.mi:nth-of-type(1) { margin-right: 12px; }

.toolbar { flex: none; height: 51px; display: flex; align-items: stretch; padding-left: 2px; background: #eee; font: bold 11px "DejaVu Sans", sans-serif; color: #3b2f3e; }
.toolbar .grip.tall { height: 42px; margin: 6px 4px 0 0; }
.tool { display: flex; flex-direction: column; align-items: center; justify-content: flex-end; padding-bottom: 3px; white-space: nowrap; letter-spacing: 0.15px; }
.tool span { line-height: 15px; }
.ti { width: 26px; height: 26px; margin: 0 -8px 2px; }
.tool.off { color: #aaa; }
.gapl { margin-left: 7.500px; }
.arr { width: 22px; position: relative; }
.arr::after { content: ""; position: absolute; left: 8px; top: 25px; border: 4px solid transparent; border-top-color: #333; border-bottom-width: 0; }
.sep { width: 1px; height: 46px; margin: 3px 5px 0; background: #aaa; }

.workspace { flex: none; height: 650px; display: flex; background: linear-gradient(#eee 0 636px, #fff 636px 645px, #eee 645px 648px, #fff 648px); }
.left { width: 266px; flex: none; }
.editor { flex: 1; min-width: 0; display: flex; flex-direction: column; }

.docktabs { display: flex; height: 23px; margin-top: 3px; border-bottom: 1px solid #b8cbe2; font: 13px "Noto Sans", sans-serif; }
.dtab { display: flex; align-items: center; height: 22px; padding-left: 6px; border-right: 1px solid #b8cbe2; color: #5a6070; }
.dtab em { letter-spacing: 1px; margin-left: 5px; }
.dti { width: 17px; height: 17px; }
.docktabs.one { padding-left: 8px; width: 264px; }
.one .dtab:nth-child(1) { width: 53px; }
.one .dtab:nth-child(2) { width: 50px; }
.one .dtab:nth-child(3) { width: 50px; background: #fff; border: 1px solid #b8cbe2; border-bottom: 0; }
.one .dtab:nth-child(4) { width: 50px; }
.one .dtab:nth-child(5) { width: 47px; }
.docktabs.two { padding-left: 9px; margin-top: 6px; width: 262px; }
.two .dtab { width: 51px; }
.two .on { background: #fff; border: 1px solid #b8cbe2; border-bottom: 0; }

.phead { display: flex; align-items: center; justify-content: space-between; padding-left: 7px; font: bold 13px "DejaVu Sans", sans-serif; color: #3a3a3a; letter-spacing: 0.2px; }
.phead.rep { height: 22px; margin-top: 3px; }
.phead.prop { height: 27px; margin-top: 1px; }
.phead.msg { height: 27px; padding-right: 12px; }
.pbtns { display: flex; gap: 8px; padding-right: 11px; align-items: center; }
.msg .pbtns { padding-right: 0; }
.pbtns svg { width: 15px; height: 15px; }

.reptools { height: 27px; display: flex; align-items: center; padding-left: 8px; gap: 5px; }
.rt { width: 17px; height: 17px; }
.arr.small { width: 16px; height: 17px; margin: 0 -1px 0 0; }
.arr.small::after { left: 3px; top: 8px; border-width: 3.500px; border-bottom-width: 0; }

.treebox { margin: 2px 0 0 2px; width: 262px; height: 300px; border: 1px solid #a9b8cc; background: #fff; }
.treeinner { display: flex; height: 284px; }
.tree { flex: 1; min-width: 0; overflow: hidden; position: relative; font-size: 14.800px; }
.row { height: 18px; line-height: 18px; display: flex; align-items: center; white-space: nowrap; position: relative; }
.row:first-child { margin-top: -5px; }
.r0 { padding-left: 5px; }
.r0 .folder { width: 19px; height: 15px; margin: 0 0 0 7px; }
.r1 { padding-left: 25px; }
.r1 .folder { width: 19px; height: 16px; margin: 0 0 0 7px; }
.r2 { padding-left: 61px; }
.r2::before { content: ""; position: absolute; left: 47px; top: -1px; bottom: 8px; width: 13px; border-left: 1px solid #b8cbe2; border-bottom: 1px solid #b8cbe2; }
.knob { width: 9px; height: 9px; border-radius: 50%; border: 2px solid #6f93c5; background: #fff; position: relative; }
.knob::after { content: ""; position: absolute; left: 2px; top: 6px; width: 1px; height: 5px; background: #6f93c5; }
.knob.small { position: absolute; left: 6px; top: 4px; width: 8px; height: 8px; }
.j { width: 15px; height: 17px; flex: none; margin-right: 2px; background: #eef4fb; border: 1px solid #3b7fd6; border-right-width: 2px; color: #c81e1e; font: bold 13px/14px "DejaVu Sans", sans-serif; text-align: center; }
.hl { background: #eee; }

.vbar { width: 15px; flex: none; background: #eee; border-left: 1px solid #b6c4d6; display: flex; flex-direction: column; }
.vbtn { height: 15px; flex: none; position: relative; background: #eee; border-bottom: 1px solid #c8d2de; }
.vbtn.down { border-top: 1px solid #c8d2de; border-bottom: 0; margin-top: auto; }
.vbtn::after { content: ""; position: absolute; left: 3px; top: 5px; border: 4px solid transparent; border-top: 0; border-bottom: 5px solid #222; }
.vbtn.down::after { border-bottom: 0; border-top: 5px solid #222; }
.vthumb { width: 14px; background: linear-gradient(90deg, #eef4fb, #bcd4f0); border: 1px solid #7f9fd0; position: relative; }
.vthumb::after { content: ""; position: absolute; left: 2px; right: 2px; top: 50%; height: 5px; margin-top: -2px; border-top: 1px solid #6c88b5; border-bottom: 1px solid #6c88b5; }
.treethumb { height: 220px; margin-top: 34px; }
.propthumb { height: 40px; }
.hbar { display: flex; height: 15px; border-top: 1px solid #a9b8cc; background: #eee; }
.hbtn { width: 15px; position: relative; flex: none; }
.hbtn.lf::after { content: ""; position: absolute; left: 4px; top: 2px; border: 5px solid transparent; border-left: 0; border-right: 5px solid #222; }
.hbtn.rt2 { width: 17px; }
.hbtn.rt2::after { content: ""; position: absolute; left: 5px; top: 2px; border: 5px solid transparent; border-right: 0; border-left: 5px solid #222; }
.hthumb { width: 116px; background: linear-gradient(#eef4fb, #bcd4f0); border: 1px solid #7f9fd0; position: relative; }
.hthumb::after { content: ""; position: absolute; top: 2px; bottom: 2px; left: 57px; width: 4px; border-left: 1px solid #6c88b5; border-right: 1px solid #6c88b5; }
.hfill { flex: 1; }

.combo { margin-left: 1px; width: 263px; height: 24px; border: 1px solid #8ea2bc; display: flex; align-items: center; background: #eee; font-size: 14.900px; padding-left: 2px; }
.combo span { flex: 1; }
.cbtn { width: 18px; height: 22px; background: linear-gradient(#f4f8fc, #c4d6ec); border-left: 1px solid #8ea2bc; position: relative; }
.cbtn::after { content: ""; position: absolute; left: 4px; top: 9px; border: 5px solid transparent; border-bottom: 0; border-top: 5px solid #222; }

.ptools { height: 25px; margin-top: 1px; display: flex; align-items: center; padding-left: 2px; gap: 5px; }
.ptsel { width: 24px; height: 24px; border: 1px solid #000; padding: 1px; }
.ptsel svg { width: 20px; height: 20px; }
.pt { width: 18px; height: 19px; }
.ptsep { width: 1px; height: 22px; background: #aaa; margin: 0 1px; }

.ptable { display: flex; width: 260px; height: 152px; margin: 3px 0 0 2px; border: 1px solid #b8cbe2; overflow: hidden; background: #fff; }
.pgrid { flex: 1; min-width: 0; font-size: 15px; overflow: hidden; }
.pr { display: flex; height: 16px; line-height: 16px; border-bottom: 1px solid #eee; }
.pn { width: 100px; border-left: 15px solid #eee; padding-left: 1px; border-right: 1px solid #eee; white-space: nowrap; overflow: hidden; position: relative; }
.pn.ind { padding-left: 17px; }
.pn.grid { font-weight: bold; overflow: visible; }
.pn .knob { left: -13px; }
.pv { flex: 1; min-width: 0; padding-left: 5px; position: relative; display: flex; align-items: center; white-space: nowrap; }
.pv.ctr { justify-content: center; padding: 0 6px 0 0; }
.pv.num { justify-content: flex-end; padding: 0 2px 0 0; }
.swatch { width: 17px; height: 11px; border: 1px solid #222; background: #fff; margin: 0 5px 0 -3px; }
.swatch.gray { background: #c0c0c0; }
.more { position: absolute; right: 1px; top: 0; width: 20px; height: 15px; background: linear-gradient(#f4f8fc, #c4d6ec); border: 1px solid #8ea2bc; font-size: 11px; line-height: 9px; text-align: center; }
.chk { width: 13px; height: 13px; border: 1px solid #7d8ea8; background: linear-gradient(#f4f8fc, #d2e0f0); font-size: 10px; line-height: 11px; text-align: center; color: #222; }
.ptable .vbar { width: 16px; }

.edtabs { height: 26px; flex: none; padding: 3px 0 0 4px; }
.edtab { display: flex; align-items: center; width: 173px; height: 23px; padding-left: 10px; background: #c6dbf1; border: 1px solid #6f8fc0; border-bottom: 0; border-radius: 6px 0 0 0; font-size: 15.500px; color: #4a4a55; gap: 5px; }
.edtab svg { width: 16px; height: 16px; }
.frame { height: 609px; margin-left: 2px; flex: none; background: #c6dbf1; border-top: 2px solid #7d95bf; border-left: 2px solid #5d7ab5; padding: 3px 0 0 3px; display: flex; flex-direction: column; }
.ftitle { flex: none; height: 22px; display: flex; align-items: center; background: linear-gradient(#fff, #d6e4f4); border-bottom: 2px solid #7289aa; padding-left: 6px; overflow: hidden; }
.fdoc { width: 16px; height: 16px; }
.fname { margin-left: 7px; height: 18px; padding: 0 2px; background: #c6dbf1; font: bold 12.500px/19px "DejaVu Sans", sans-serif; color: #222; }
.dots { flex: 1; height: 14px; background: repeating-conic-gradient(#9dbbe2 0 25%, #e2ecf7 0 50%) 0 0 / 3px 3px; }
.fbtn { width: 15px; height: 15px; margin-left: 9px; }
.fbtn.cut { margin-right: -9px; }
.fview { flex: none; height: 575px; display: flex; background: #eee; }
.palette { width: 165px; flex: none; border-right: 1px solid #a8a8a8; display: flex; flex-direction: column; font-size: 14.700px; color: #4d4d4d; }
.paltools { height: 26px; flex: none; display: flex; align-items: center; padding-left: 1px; }
.palsel { width: 21px; height: 25px; border: 1px solid #fff; border-right-color: #999; display: flex; align-items: center; justify-content: center; }
.palsel svg { width: 14px; height: 18px; }
.pal18 { width: 18px; height: 19px; margin-left: 3px; }
.sbtn { width: 14px; height: 14px; margin-left: 6px; background: #fafafa; border: 1px solid #bbb; font: bold 10px/12px "DejaVu Sans", sans-serif; text-align: center; color: #111; }
.pal18.tri { margin-left: 7px; }
.palsep { width: 1px; height: 20px; background: #888; margin-left: 4px; }
.chev { width: 9px; height: 11px; margin-left: 9px; }
.palup { height: 13px; flex: none; position: relative; }
.palup::after { content: ""; position: absolute; left: 76px; top: 1px; border: 6px solid transparent; border-top: 0; border-bottom: 8px solid #c4c4c4; }
.palhead { flex: none; display: flex; align-items: center; height: 19px; padding-left: 1px; background: linear-gradient(#fff, #e2e2e2); border-top: 1px solid #aaa; border-bottom: 1px solid #aaa; color: #4a4a55; font-size: 15.500px; }
.palhead.cls { height: 21px; border-top: 0; }
.palhead.common { margin-top: 4px; }
.phi { width: 18px; height: 18px; margin-right: 3px; }
.palhead span { flex: 1; }
.ud { width: 12px; height: 14px; margin-right: 6px; }
.palitems { flex: none; margin-top: 2px; }
.palitems.low { margin-top: 3px; }
.pi { height: 24px; display: flex; align-items: center; padding-left: 4px; position: relative; white-space: nowrap; }
.pi svg { width: 18px; height: 18px; margin-right: 6px; }
.more1::after { content: ""; position: absolute; right: 2px; top: 10px; border: 3px solid transparent; border-bottom: 0; border-top: 4px solid #222; }
.paldown { flex: 1; position: relative; }
.paldown::after { content: ""; position: absolute; left: 76px; top: 2px; border: 6px solid transparent; border-bottom: 0; border-top: 8px solid #333; }

.pane { flex: 1; min-width: 0; display: flex; flex-direction: column; margin-left: 3px; }
.dtabstrip { height: 25px; flex: none; display: flex; align-items: flex-end; padding-top: 1px; }
.dtabname { display: block; width: 117px; height: 24px; background: #fff; border: 1px solid #000; border-bottom: 0; padding-left: 3px; font-size: 15.500px; line-height: 22px; color: #3a3a4a; }
.zoomglass { width: 9px; height: 9px; margin: 0 0 2px 4px; }
.canvas { height: 550px; position: relative; overflow: hidden; background: #fff; border-top: 1px solid #111; font: 11px/14px "DejaVu Sans", sans-serif; color: #0b1a26; }
.node { position: absolute; background: #7accf3; border: 1px solid #000; white-space: nowrap; }
.uml { left: 21px; top: -8px; width: 521px; height: 536px; }
.attrs { height: 299px; padding: 3px 0 0 2px; border-bottom: 1px solid #000; }
.methods { padding: 2px 0 0 2px; }
.st { text-decoration: underline; text-underline-offset: 2px; }
.adapter { left: 611px; top: -13px; width: 411px; height: 32px; padding: 8px 0 0 2px; }
.note { left: 661px; top: 107px; width: 199px; height: 50px; padding: 2px 0 0 2px; }
.wires { position: absolute; left: 0; top: 0; }
.pointer { position: absolute; left: 672px; top: 391px; width: 12px; height: 20px; }
.edgebar { position: absolute; right: 0; top: 5px; bottom: 0; width: 6px; border-left: 1px solid #9aa5b5; background: #f5f5f5; }
.ffoot { flex: none; height: 4px; margin-top: 3px; background: linear-gradient(#5d7ab5 0 1px, #2a2a33 1px 2px, #5d7ab5 2px); }

.message { flex: 1; position: relative; background: #eee; }
.msgbox { height: 45px; margin: 0 1px; background: #c6dcf2; border: 1px solid #6282bf; padding-left: 7px; line-height: 45px; font-size: 14.500px; color: #3f3c44; }
.msgtabs { display: flex; height: 25px; padding-left: 4px; font-size: 14.600px; }
.mt { height: 25px; line-height: 24px; border-right: 1px solid #7f92b3; }
.log { width: 46px; padding-left: 9px; border-left: 1px solid #7f92b3; }
.mt.rtm { width: 161px; padding-left: 10px; }
.mt.on { width: 143px; padding-left: 8px; margin-left: 2px; background: #c6dcf2; border-left: 1px solid #7f92b3; }
```
